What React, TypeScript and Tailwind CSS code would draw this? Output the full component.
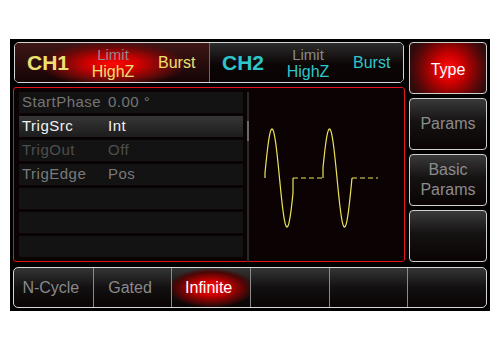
const FONT = { fontFamily: '"Liberation Sans", Arial, sans-serif' };

const rows = [
  { label: "StartPhase", value: "0.00 °", tone: "text-[#767676]", sel: false },
  { label: "TrigSrc", value: "Int", tone: "text-[#f2f2f2]", sel: true },
  { label: "TrigOut", value: "Off", tone: "text-[#4e4e4e]", sel: false },
  { label: "TrigEdge", value: "Pos", tone: "text-[#7a7a7a]", sel: false },
  null,
  null,
  null,
];

const tabs = ["N-Cycle", "Gated", "Infinite", "", "", ""];

function cycle(x0: number, x1: number, peak: number) {
  const mid = 174;
  const amp = 49;
  const y = (x: number) => mid - amp * Math.cos(((x - peak) / 30) * 2 * Math.PI);
  let d = `M${x0} ${mid} L${x0} ${y(x0).toFixed(1)}`;
  for (let x = x0; x <= x1; x += 0.5) d += ` L${x} ${y(x).toFixed(1)}`;
  d += ` L${x1} ${mid}`;
  return d;
}

function Wave() {
  return (
    <svg width="155" height="173" viewBox="249 88 155 173" className="block">
      <path d={cycle(265, 293, 272)} fill="none" stroke="#ece35a" strokeWidth="1.2" />
      <path d={cycle(323, 352, 329.5)} fill="none" stroke="#ece35a" strokeWidth="1.2" />
      <path d="M293 174 H323 M352 174 H378" stroke="#ece35a" strokeWidth="1.2" strokeDasharray="5 3" />
    </svg>
  );
}

function ChannelBlock({ ch, color, glow }: { ch: string; color: string; glow: boolean }) {
  return (
    <div
      className={
        "flex items-center h-full pl-3 " +
        (glow
          ? "w-[194px] bg-[radial-gradient(ellipse_74px_23px_at_98px_21px,#ff0606_0%,#d00000_35%,#6a0909_72%,transparent_100%),linear-gradient(#3e1616,#160404)]"
          : "flex-1 bg-[linear-gradient(#2c2c2c,#0c0505_55%,#0a0303)]")
      }
    >
      <div className={`w-[56px] text-[21px] font-bold leading-none ${color}`}>{ch}</div>
      <div className="w-[60px] flex flex-col items-center leading-[17px] pt-[1px]">
        <span className="text-[15px] text-[#8a8a8a]">Limit</span>
        <span className={`text-[16px] ${color}`}>HighZ</span>
      </div>
      <div className={`ml-[15px] text-[16px] ${color}`}>Burst</div>
    </div>
  );
}

function SideButton({ children, active }: { children?: React.ReactNode; active?: boolean }) {
  return (
    <div
      className={
        "h-[52px] rounded-[4px] border border-[#cfcfcf] flex items-center justify-center text-center text-[16px] leading-[20px] " +
        (active
          ? "text-white pt-[4px] bg-[radial-gradient(circle_40px_at_39px_26px,#ff1212_0%,#d00000_35%,#5a0707_80%,#2e0c0c_100%)]"
          : "text-[#8c8c8c] bg-[linear-gradient(#3a3a3a,#151212_45%,#0a0404)]")
      }
    >
      {children}
    </div>
  );
}

export default function App() {
  return (
    <div className="w-[500px] h-[350px] bg-white pt-[39px] pl-[10px]" style={FONT}>
      <div className="w-[480px] h-[272px] bg-black pt-[3px] pl-[3px]">
        <div className="flex gap-[4px]">
          <div className="w-[392px] flex flex-col gap-[4px]">
            <div className="ml-[1px] w-[390px] h-[41px] rounded-[5px] border border-[#d6d6d6] overflow-hidden flex">
              <ChannelBlock ch="CH1" color="text-[#eee070]" glow />
              <div className="w-px bg-[#6a6a6a]" />
              <ChannelBlock ch="CH2" color="text-[#2cc6cc]" glow={false} />
            </div>
            <div className="h-[175px] rounded-[3px] border border-[#e3121c] bg-[#0b0303] flex pt-[4px] pl-[5px]">
              <div className="w-[224px] flex flex-col gap-[3px]">
                {rows.map((r, i) =>
                  r ? (
                    <div
                      key={i}
                      className={
                        "h-[21px] flex items-center pl-[3px] text-[15px] tracking-[0.5px] " +
                        r.tone +
                        (r.sel ? " bg-[linear-gradient(#363636,#1c1c1c)]" : " bg-[#131313]")
                      }
                    >
                      <span className="w-[86px]">{r.label}</span>
                      <span>{r.value}</span>
                    </div>
                  ) : (
                    <div key={i} className="h-[21px] bg-[#131313]" />
                  )
                )}
              </div>
              <div className="ml-[4px] w-[2px] h-[170px] bg-[#2a2a2a] flex flex-col">
                <div className="mt-[29px] h-[20px] bg-[#6a6a6a]" />
              </div>
              <Wave />
            </div>
          </div>
          <div className="w-[78px] flex flex-col gap-[4px]">
            <SideButton active>Type</SideButton>
            <SideButton>Params</SideButton>
            <SideButton>
              Basic
              <br />
              Params
            </SideButton>
            <SideButton />
          </div>
        </div>
        <div className="mt-[5px] w-[474px] h-[41px] rounded-[5px] border border-[#d6d6d6] overflow-hidden grid grid-cols-6 bg-[linear-gradient(#353535,#121010_50%,#0a0404)]">
          {tabs.map((t, i) => (
            <div
              key={i}
              className={
                "flex items-center justify-center pr-[5px] text-[16px] " +
                (i > 0 ? "border-l border-[#8a8a8a] " : "") +
                (t === "Infinite"
                  ? "text-white bg-[radial-gradient(ellipse_44px_20px_at_39px_20px,#ff0e0e_0%,#c80000_38%,#4a0606_80%,transparent_100%)]"
                  : "text-[#8a8a8a]")
              }
            >
              {t}
            </div>
          ))}
        </div>
      </div>
    </div>
  );
}
